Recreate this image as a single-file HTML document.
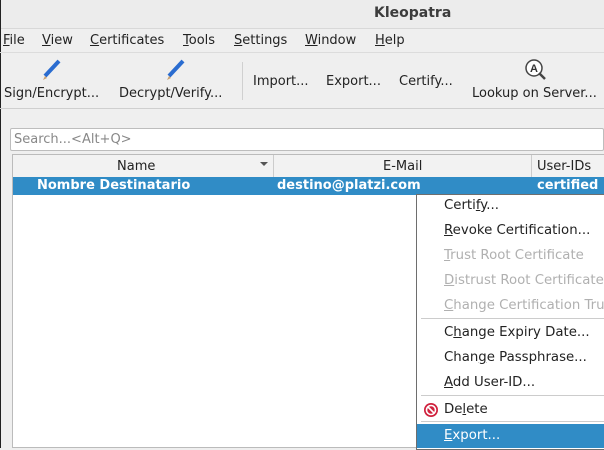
<!DOCTYPE html>
<html><head><style>
body{margin:0;width:604px;height:448px;overflow:hidden;background:#efefef;font-family:"DejaVu Sans","Liberation Sans",sans-serif;color:#222;position:relative;font-size:13px}
.a{position:absolute;white-space:nowrap}
u{text-decoration:underline}
.mi{position:absolute;left:444px;font-size:13.3px;white-space:nowrap}
.dis{color:#b0b0b0}
</style></head><body>
<div class="a" style="left:0;top:0;width:604px;height:28px;background:#ececec;border-bottom:1px solid #d8d8d8"></div>
<div class="a" style="left:374px;top:5px;font-weight:bold;color:#3c3c3c;font-size:14px">Kleopatra</div>
<div class="a" style="left:0;top:0;width:1px;height:448px;background:#222"></div>
<div class="a" style="left:3px;top:33px"><u>F</u>ile</div>
<div class="a" style="left:42px;top:33px"><u>V</u>iew</div>
<div class="a" style="left:90px;top:33px"><u>C</u>ertificates</div>
<div class="a" style="left:183px;top:33px"><u>T</u>ools</div>
<div class="a" style="left:234px;top:33px"><u>S</u>ettings</div>
<div class="a" style="left:305px;top:33px"><u>W</u>indow</div>
<div class="a" style="left:375px;top:33px"><u>H</u>elp</div>
<div class="a" style="left:0;top:52px;width:604px;height:1px;background:#dcdcdc"></div>
<div class="a" style="left:0;top:108px;width:604px;height:1px;background:#cfcfcf"></div>
<svg class="a" style="left:40px;top:59px" width="22" height="22"><path d="M19 2 L5 17" stroke="#2a6cd0" stroke-width="4"/><path d="M5 17 L3 21 L7 19Z" fill="#c8a070"/></svg>
<svg class="a" style="left:164px;top:59px" width="22" height="22"><path d="M19 2 L5 17" stroke="#2a6cd0" stroke-width="4"/><path d="M5 17 L3 21 L7 19Z" fill="#c8a070"/></svg>
<div class="a" style="left:4px;top:86px">Sign/Encrypt...</div>
<div class="a" style="left:119px;top:86px">Decrypt/Verify...</div>
<div class="a" style="left:242px;top:62px;width:1px;height:38px;background:#d0d0d0"></div>
<div class="a" style="left:253px;top:74px">Import...</div>
<div class="a" style="left:326px;top:74px">Export...</div>
<div class="a" style="left:399px;top:74px">Certify...</div>
<svg class="a" style="left:524px;top:58px" width="24" height="24"><circle cx="10" cy="10" r="8" fill="#fff" stroke="#444" stroke-width="1.5"/><path d="M15 15 L21 21" stroke="#444" stroke-width="2.5"/><text x="10" y="14" font-size="11" font-weight="bold" text-anchor="middle" fill="#333" font-family="Liberation Sans">A</text></svg>
<div class="a" style="left:472px;top:86px">Lookup on Server...</div>
<div class="a" style="left:10px;top:128px;width:594px;height:23px;background:#fff;border:1px solid #bdbdbd;border-radius:2px;box-sizing:border-box"></div>
<div class="a" style="left:14px;top:132px;color:#888">Search...&lt;Alt+Q&gt;</div>
<div class="a" style="left:12px;top:154px;width:592px;height:294px;background:#fff;border:1px solid #bbb;box-sizing:border-box"></div>
<div class="a" style="left:13px;top:155px;width:591px;height:22px;background:#f2f2f2;border-bottom:1px solid #ccc"></div>
<div class="a" style="left:273px;top:155px;width:1px;height:22px;background:#ccc"></div>
<div class="a" style="left:531px;top:155px;width:1px;height:22px;background:#ccc"></div>
<div class="a" style="left:117px;top:159px">Name</div>
<div class="a" style="left:260px;top:162px;width:0;height:0;border-left:4px solid transparent;border-right:4px solid transparent;border-top:4px solid #555"></div>
<div class="a" style="left:383px;top:159px">E-Mail</div>
<div class="a" style="left:537px;top:159px">User-IDs</div>
<div class="a" style="left:13px;top:177px;width:591px;height:18px;background:#308cc6"></div>
<div class="a" style="left:37px;top:178px;color:#fff;font-weight:bold">Nombre Destinatario</div>
<div class="a" style="left:277px;top:178px;color:#fff;font-weight:bold">destino@platzi.com</div>
<div class="a" style="left:537px;top:178px;color:#fff;font-weight:bold">certified</div>
<div class="a" style="left:416px;top:194px;width:190px;height:256px;background:#fff;border:1px solid #6e6e6e;box-sizing:border-box"></div>
<div class="mi" style="top:198px">Certi<u>f</u>y...</div>
<div class="mi" style="top:223px"><u>R</u>evoke Certification...</div>
<div class="mi dis" style="top:248px"><u>T</u>rust Root Certificate</div>
<div class="mi dis" style="top:273px"><u>D</u>istrust Root Certificate</div>
<div class="mi dis" style="top:298px"><u>C</u>hange Certification Trust</div>
<div class="a" style="left:421px;top:318px;width:183px;height:1px;background:#ccc"></div>
<div class="mi" style="top:325px">C<u>h</u>ange Expiry Date...</div>
<div class="mi" style="top:350px">Chan<u>g</u>e Passphrase...</div>
<div class="mi" style="top:375px"><u>A</u>dd User-ID...</div>
<div class="a" style="left:421px;top:395px;width:183px;height:1px;background:#ccc"></div>
<svg class="a" style="left:423px;top:402px" width="16" height="16"><circle cx="8" cy="8" r="7" fill="#d0213d"/><circle cx="8" cy="8" r="4.5" fill="none" stroke="#fff" stroke-width="1.6"/><path d="M5 5 L11 11" stroke="#fff" stroke-width="1.6"/></svg>
<div class="mi" style="top:402px">De<u>l</u>ete</div>
<div class="a" style="left:421px;top:421px;width:183px;height:1px;background:#ccc"></div>
<div class="a" style="left:417px;top:424px;width:187px;height:24px;background:#308cc6"></div>
<div class="mi" style="top:428px;color:#fff"><u>E</u>xport...</div>
</body></html>
